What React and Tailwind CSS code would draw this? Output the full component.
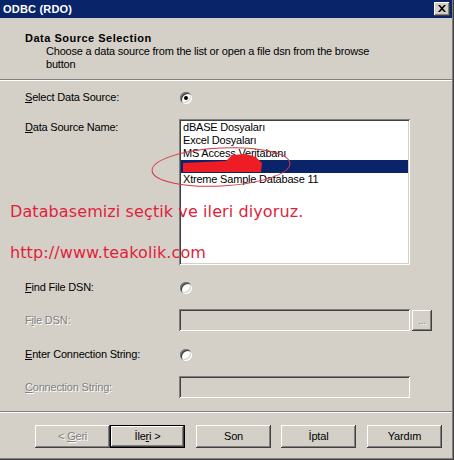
import React from 'react'

const sunken =
  'shadow-[inset_1px_1px_0_#808080,inset_-1px_-1px_0_#ffffff,inset_2px_2px_0_#404040,inset_-2px_-2px_0_#d4d0c8]'
const raised =
  'shadow-[inset_-1px_-1px_0_#404040,inset_1px_1px_0_#ffffff,inset_-2px_-2px_0_#808080]'
const disabledText = 'text-[#808080] [text-shadow:1px_1px_0_#ffffff]'

const Radio = ({ checked }) => (
  <div
    className={`w-[12px] h-[12px] rounded-full bg-white flex items-center justify-center ${sunken}`}
  >
    {checked && <div className="w-[4px] h-[4px] rounded-full bg-black" />}
  </div>
)

const Row = ({ label, disabled, className = '', align = 'items-center', children }) => (
  <div className={`flex ${align} ${className}`}>
    <div className={`w-[154px] h-[13px] leading-[13px] ${disabled ? disabledText : 'text-black'}`}>
      {label}
    </div>
    <div className="flex items-center">{children}</div>
  </div>
)

const WinButton = ({ children, isDefault, disabled, className = '' }) => (
  <div
    className={`w-[75px] h-[23px] flex items-center justify-center bg-[#d4d0c8] ${
      isDefault ? 'border border-black' : ''
    } ${raised} ${disabled ? disabledText : 'text-black'} ${className}`}
  >
    {children}
  </div>
)

const items = ['dBASE Dosyaları', 'Excel Dosyaları', 'MS Access Veritabanı', '', 'Xtreme Sample Database 11']

export default function App() {
  return (
    <div className="w-[454px] h-[460px] bg-[#d4d0c8] border-r border-b border-[#404040] relative overflow-hidden font-['Liberation_Sans',Arial,sans-serif] text-[11px] tracking-[-0.2px] select-none">
      <div className="h-full border-r border-b border-[#808080] flex flex-col">
        {/* title bar */}
        <div className="h-[18px] bg-[#0a246a] flex items-center justify-between pl-[3px] pr-[2px]">
          <span className="text-white font-bold text-[11px] leading-[13px] tracking-[0.2px]">ODBC (RDO)</span>
          <div className={`w-[16px] h-[14px] bg-[#d4d0c8] flex items-center justify-center ${raised}`}>
            <svg width="8" height="7" viewBox="0 0 8 7" className="-mt-[1px] -ml-[1px]">
              <path d="M0 0h2l2 2.2L6 0h2L5 3.5 8 7H6L4 4.8 2 7H0l3-3.5z" fill="#000" />
            </svg>
          </div>
        </div>

        {/* header */}
        <div className="h-[61px] pt-[14px] pl-[25px]">
          <div className="font-bold leading-[13px] text-black tracking-[0.5px]">Data Source Selection</div>
          <div className="pl-[21px] leading-[13px] text-black">
            Choose a data source from the list or open a file dsn from the browse
            <br />
            button
          </div>
        </div>
        <div className="border-t border-[#808080] border-b border-b-white" />

        {/* body */}
        <div className="pl-[25px] flex flex-col">
          <Row
            className="mt-[10px]"
            label={
              <>
                <u>S</u>elect Data Source:
              </>
            }
          >
            <div className="ml-[1px]">
              <Radio checked />
            </div>
          </Row>

          <Row
            className="mt-[15px]"
            align="items-start"
            label={
              <div className="pt-[2px]">
                <u>D</u>ata Source Name:
              </div>
            }
          >
            <div className={`w-[231px] h-[146px] bg-white p-[2px] ${sunken}`}>
              {items.map((item, i) => (
                <div
                  key={i}
                  className={`h-[13px] leading-[13px] pl-[2px] ${
                    i === 3 ? 'bg-[#0a246a] text-white' : 'text-black'
                  }`}
                >
                  {item}
                </div>
              ))}
            </div>
          </Row>

          <Row
            className="mt-[16px]"
            label={
              <>
                <u>F</u>ind File DSN:
              </>
            }
          >
            <div className="ml-[1px]">
              <Radio />
            </div>
          </Row>

          <Row
            className="mt-[15px]"
            disabled
            label={
              <>
                F<u>i</u>le DSN:
              </>
            }
          >
            <div className={`w-[231px] h-[22px] bg-[#d4d0c8] ${sunken}`} />
            <div
              className={`ml-[2px] w-[20px] h-[21px] bg-[#d4d0c8] flex items-end justify-center pb-[5px] ${raised}`}
            >
              <span className="text-[#808080] text-[9px] leading-[9px] [text-shadow:1px_1px_0_#ffffff]">...</span>
            </div>
          </Row>

          <Row
            className="mt-[17px]"
            label={
              <>
                <u>E</u>nter Connection String:
              </>
            }
          >
            <div className="ml-[1px]">
              <Radio />
            </div>
          </Row>

          <Row
            className="mt-[15px]"
            disabled
            label={
              <>
                <u>C</u>onnection String:
              </>
            }
          >
            <div className={`w-[231px] h-[22px] bg-[#d4d0c8] ${sunken}`} />
          </Row>
        </div>

        {/* footer */}
        <div className="mt-[13px] border-t border-[#808080] border-b border-b-white" />
        <div className="mt-[12px] flex pl-[35px]">
          <WinButton disabled>
            &lt; <u className="ml-[3px]">G</u>eri
          </WinButton>
          <WinButton isDefault>
            İle<u>r</u>i &gt;
          </WinButton>
          <WinButton className="ml-[11px]">Son</WinButton>
          <WinButton className="ml-[10px]">İptal</WinButton>
          <WinButton className="ml-[11px]">Yardım</WinButton>
        </div>
      </div>

      {/* annotation overlay */}
      <svg className="absolute left-0 top-0 pointer-events-none" width="454" height="460">
        <path
          d="M183 163 L226 161 L232 155 L246 154 L256 157 L262 163 L261 172 L183 172 Z"
          fill="#ee1c25"
        />
        <ellipse
          cx="221"
          cy="167"
          rx="69"
          ry="19"
          transform="rotate(-3 221 167)"
          fill="none"
          stroke="#d23a48"
          strokeWidth="1"
        />
      </svg>
      <div className="absolute left-[10px] top-[202px] font-['DejaVu_Sans',Verdana,sans-serif] text-[16px] leading-[19px] tracking-[0.1px] text-[#e01f3d] whitespace-nowrap">
        Databasemizi seçtik ve ileri diyoruz.
      </div>
      <div className="absolute left-[10px] top-[243px] font-['DejaVu_Sans',Verdana,sans-serif] text-[16px] leading-[19px] tracking-[0.1px] text-[#e01f3d] whitespace-nowrap">
        http://www.teakolik.com
      </div>
    </div>
  )
}
